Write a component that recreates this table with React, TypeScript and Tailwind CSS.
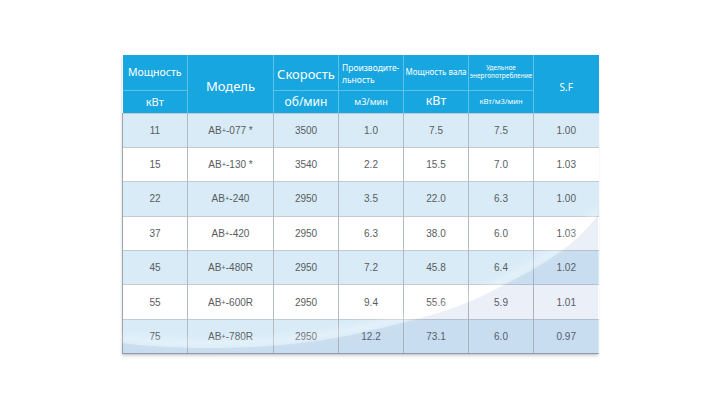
const rows = [
  ['11', '077 *', '3500', '1.0', '7.5', '7.5', '1.00'],
  ['15', '130 *', '3540', '2.2', '15.5', '7.0', '1.03'],
  ['22', '240', '2950', '3.5', '22.0', '6.3', '1.00'],
  ['37', '420', '2950', '6.3', '38.0', '6.0', '1.03'],
  ['45', '480R', '2950', '7.2', '45.8', '6.4', '1.02'],
  ['55', '600R', '2950', '9.4', '55.6', '5.9', '1.01'],
  ['75', '780R', '2950', '12.2', '73.1', '6.0', '0.97'],
]

const widths = [65, 86, 65, 65, 65, 65, 65]

function Swoosh() {
  const curve = 'M0 288 C 60 296, 160 296, 238 278 S 340 252, 378 232 S 450 195, 476 160'
  return (
    <svg
      className="absolute inset-0 pointer-events-none"
      width="476"
      height="300"
      viewBox="0 0 476 300"
      preserveAspectRatio="none"
    >
      <defs>
        <filter id="soft" x="-10%" y="-50%" width="120%" height="200%">
          <feGaussianBlur stdDeviation="3" />
        </filter>
      </defs>
      <path d={curve} transform="translate(0 -5)" fill="none" stroke="#ffffff" strokeOpacity="0.3" strokeWidth="8" filter="url(#soft)" />
      <path d={`${curve} L 476 300 L 0 300 Z`} fill="#466eb4" fillOpacity="0.11" />
    </svg>
  )
}

export default function App() {
  const th = 'text-white font-normal text-center align-middle border-[#5ec1ea] leading-none whitespace-nowrap'
  return (
    <div className="w-[720px] h-[405px] bg-white pt-[55px] pl-[122px] font-['Noto_Sans',sans-serif]">
      <div className="relative w-[476px] shadow-[0_2px_3px_rgba(0,0,0,0.18)]">
        <table className="table-fixed border-collapse w-[476px]">
          <colgroup>
            {widths.map((w, i) => (
              <col key={i} style={{ width: w }} />
            ))}
          </colgroup>
          <thead className="bg-[#17a6df]">
            <tr className="h-[35px]">
              <th className={`${th} border-r border-b text-[10.5px]`}>Мощность</th>
              <th rowSpan={2} className={`${th} border-r text-[13px] pt-[6px]`}>Модель</th>
              <th className={`${th} border-r border-b text-[13px] pt-[4px]`}>Скорость</th>
              <th className={`${th} border-r border-b text-[8.5px] text-left pl-[3px] pt-[3px]`}>
                <span className="block leading-[12px]">Производите-</span>
                <span className="block leading-[12px]">льность</span>
              </th>
              <th className={`${th} border-r border-b text-[8px]`}>Мощность вала</th>
              <th className={`${th} border-r border-b text-[6.5px]`}>
                <span className="block leading-[8.5px]">Удельное</span>
                <span className="block leading-[8.5px]">энергопотребление</span>
              </th>
              <th rowSpan={2} className={`${th} text-[10px] font-bold pt-[6px]`}>S.F</th>
            </tr>
            <tr className="h-[23px]">
              <th className={`${th} border-r text-[11px]`}>кВт</th>
              <th className={`${th} border-r text-[12px]`}>об/мин</th>
              <th className={`${th} border-r text-[9px]`}>м3/мин</th>
              <th className={`${th} border-r text-[12.5px]`}>кВт</th>
              <th className={`${th} border-r text-[7.5px]`}>кВт/м3/мин</th>
            </tr>
          </thead>
          <tbody className="font-['Liberation_Sans',Arial,sans-serif] text-[10px] text-[#585c60]">
            {rows.map((r, i) => (
              <tr key={i} className={`h-[34.4px] ${i % 2 === 0 ? 'bg-[#d8ebf7]' : 'bg-white'}`}>
                {r.map((c, j) => (
                  <td
                    key={j}
                    className={`text-center align-middle border-t border-[#c3cad0] ${
                      j === 0 ? 'border-l border-l-[#9ea6ad]' : ''
                    } ${j < 6 ? 'border-r border-r-[#b3bac1]' : ''} ${
                      i === rows.length - 1 ? 'border-b border-b-[#9aa3ab]' : ''
                    }`}
                  >
                    {j === 1 ? (
                      <>
                        AB<sup className="text-[7.5px] relative -top-[1px]">+</sup>-{c}
                      </>
                    ) : (
                      c
                    )}
                  </td>
                ))}
              </tr>
            ))}
          </tbody>
        </table>
        <Swoosh />
      </div>
    </div>
  )
}
